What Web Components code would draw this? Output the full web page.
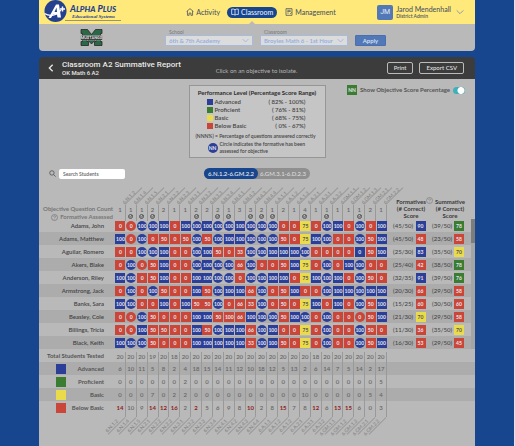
<!DOCTYPE html>
<html lang="en">
<head>
<meta charset="utf-8">
<title>Classroom A2 Summative Report</title>
<style>
  :root {
    --page: #17468f; --brand: #17468f; --panel: #b9b9b9; --band: #acacac;
    --blue: #2c3f98; --green: #3a7c30; --yellow: #eadb4b; --red: #c94639; --ink: #444;
  }
  html, body { margin: 0; background: var(--page); }
  body { font-family: Lato, "Noto Sans", sans-serif; font-size: 6px; line-height: 8px; color: var(--ink); }
</style>
</head>
<body>
<report-app>
  <app-header slot="header"></app-header>
  <school-filter slot="filter"></school-filter>
  <report-title slot="title">
    <span slot="name">Classroom A2 Summative Report</span>
    <span slot="sub">OK Math 6 A2</span>
    <span slot="hint">Click on an objective to isolate.</span>
  </report-title>
  <report-tools></report-tools>
  <score-table></score-table>
</report-app>

<script>
const define = (name, html, init) => {
  const t = document.createElement('template');
  t.innerHTML = '<style>:host,*{box-sizing:border-box}button,input,select{font:inherit;margin:0}a{color:inherit;text-decoration:none}svg{display:block;flex:none}</style>' + html;
  customElements.define(name, class extends HTMLElement {
    constructor() {
      super();
      this.attachShadow({ mode: 'open' }).append(t.content.cloneNode(true));
    }
    connectedCallback() { if (init && !this.ready) { this.ready = true; init(this, this.shadowRoot); } }
  });
};

const ICONS = {
  home: '<path d="M1 5.2 6 1l5 4.2M2.2 4.5V11h2.4V7.5h2.8V11h2.4V4.5"/>',
  book: '<path d="M6 2.6v8M6 2.6C5 1.6 3 1.4 1 1.7v8c2-.3 4 0 5 .9 1-.9 3-1.2 5-.9v-8c-2-.3-4-.1-5 .9"/>',
  manage: '<path d="M1.5 1h9v10h-9zM3.5 3.4h5M3.5 5.2h5M3.5 7.6h2M7.5 7.6l.8.9 1.6-2"/>',
  down: '<path d="M1 3.5 6 8.5l5-5"/>',
  back: '<path d="M8.5 1 3.5 6l5 5"/>',
  search: '<circle cx="5" cy="5" r="3.8"/><path d="m8 8 3.4 3.4"/>',
  help: '<circle cx="6" cy="6" r="5.2"/><path d="M4.4 4.7c0-2.2 3.3-2.1 3.3-.2C7.7 5.7 6 5.7 6 7.1M6 8.4v.9"/>',
  check: '<circle cx="6" cy="6" r="4.8"/><path d="m3.6 6 1.8 1.9L11 2"/>'
};
define('ui-icon', `<style>:host{display:inline-block;width:8px;height:8px;flex:none}svg{width:100%;height:100%}</style>
  <svg viewBox="0 0 12 12" fill="none" stroke="currentColor" aria-hidden="true"></svg>`,
  (el, r) => {
    const s = r.querySelector('svg');
    s.setAttribute('stroke-width', el.getAttribute('weight') || '1.2');
    s.innerHTML = ICONS[el.getAttribute('name')];
  });

define('brand-logo', `<style>
  :host{display:flex;gap:3px;color:#24418f}
  .badge{width:23px;height:23px}
  .words{display:flex;flex-direction:column;padding-top:4px}
  b{font:italic 900 9px/9px Lato,sans-serif;white-space:nowrap}
  b i{font-size:8px}
  small{font:italic bold 5px/6px "Liberation Serif",serif;padding-left:2px;white-space:nowrap}
  hr{margin:0 0 0 -5px;border:0;border-top:1px solid #9a9470;width:56px}
  </style>
  <svg class="badge" viewBox="0 0 46 46" aria-hidden="true">
    <circle cx="23" cy="22" r="22" fill="#24418f"/>
    <path d="M9 36 24 9h6l4 26h-7l-1-6H18l-4 7zM21 24h5l-1-9z" fill="#fff"/>
    <path d="M1 27C12 34 26 31 34 20" fill="none" stroke="#fff" stroke-width="2.5"/>
    <path d="M37 13v10M32 18h10" stroke="#fff" stroke-width="3"/>
  </svg>
  <div class="words"><b>A<i>LPHA</i> P<i>LUS</i></b><small>Educational Systems</small><hr></div>`);

define('app-header', `<style>
  :host{display:grid;grid-template-columns:1fr auto 1fr;background:#ffe97b;height:24px;padding:0 11px 0 5px;color:#4c5560;align-items:center}
  brand-logo{align-self:start}
  nav{display:flex;align-items:center;gap:11px;padding-left:14px;font-size:7px;font-weight:500;line-height:11px}
  nav a{display:flex;align-items:center;gap:2px;position:relative}
  .on{background:var(--brand);color:#e8eefa;border-radius:6px;padding:0 4px;margin:0 -3px 0 -4px}
  .on::after{content:"";position:absolute;left:calc(50% - 4px);top:14px;border:4px solid transparent;border-top:0;border-bottom-color:var(--panel)}
  .user{display:flex;justify-self:end;align-items:center;gap:3px;padding:0;border:0;background:none;color:inherit;text-align:left}
  .av{width:16px;height:15px;border-radius:2px;background:#5378b8;color:#e4ebf7;font:7px/15px Roboto,sans-serif;text-align:center}
  .who{display:block;font-size:7px;font-weight:500;line-height:8px;white-space:nowrap}
  .who small{display:block;font-size:5px;line-height:6px;font-weight:600}
  .user ui-icon{color:#6b86b5;margin-left:2px}
  </style>
  <brand-logo></brand-logo>
  <nav><a href="#activity"><ui-icon name="home"></ui-icon>Activity</a><a class="on" href="#classroom"><ui-icon name="book"></ui-icon>Classroom</a><a href="#management"><ui-icon name="manage"></ui-icon>Management</a></nav>
  <button class="user"><span class="av">JM</span><span class="who">Jarod Mendenhall<small>District Admin</small></span><ui-icon name="down"></ui-icon></button>`);

define('school-filter', `<style>
  :host{display:flex;align-items:flex-end;gap:7px;height:27px;background:var(--panel);border-radius:0 0 4px 4px;padding:0 40px 5px 41px;color:#777}
  .team{width:23px;height:17px;margin-right:auto}
  .field{position:relative;flex:0 1 88px;display:flex;flex-direction:column}
  label{font-size:5px;line-height:6px;padding-left:4px}
  select{appearance:none;width:100%;height:11px;border:1px solid #a9bbdd;border-radius:1px;background:#dcdcdc;color:#8fade0;font-size:6px;font-weight:600;line-height:9px;padding:0 12px 0 3px}
  .field ui-icon{position:absolute;right:4px;bottom:2px;width:7px;height:7px;color:#8fade0}
  button{width:31px;height:11px;border:1px solid #4a6fb0;border-radius:1px;background:#5378b8;color:#dde6f5;font-size:6px;font-weight:600;line-height:9px;padding:0;margin-right:49px}
  </style>
  <svg class="team" viewBox="0 0 46 34" role="img" aria-label="School logo">
    <path d="M2 1h13l8 10 8-10h13v8h-3v16h3v8H29v-8h3v-5l-9 10-9-10v5h3v8H2v-8h3V9H2z" fill="#2b6848" stroke="#222" stroke-width="1.5"/>
    <path d="M1 13h44v9H1z" fill="#111" stroke="#ddd"/>
    <text x="23" y="20.5" text-anchor="middle" font-family="Roboto" font-weight="bold" font-size="8" fill="#eee">MUSTANGS</text>
  </svg>
  <div class="field"><label for="s">School</label><select id="s"><option>6th &amp; 7th Academy</option></select><ui-icon name="down"></ui-icon></div>
  <div class="field"><label for="c">Classroom</label><select id="c"><option>Broyles Math 6 - 1st Hour</option></select><ui-icon name="down"></ui-icon></div>
  <button>Apply</button>`);

define('report-title', `<style>
  :host{display:grid;grid-template-columns:1fr auto 1fr;align-items:center;height:22px;background:#3c3c3c;border-radius:4px 4px 0 0;color:#e8e8e8;padding:0 11px 0 8px}
  .l{display:flex;align-items:center;gap:7px}
  .l button{border:0;background:none;color:inherit;padding:0;display:flex}
  h1{margin:0;font:500 8px/9px Roboto,sans-serif;white-space:nowrap;width:0}
  h1 small{display:block;font-size:6px;line-height:7px}
  .hint{color:#b5b5b5;padding-top:5px;padding-left:2px;white-space:nowrap}
  .r{display:flex;gap:6px;justify-self:end}
  .r button{height:12px;border:1px solid #bbb;border-radius:2px;background:none;color:#ddd;padding:0 6px;font-size:6px;font-weight:600;line-height:10px}
  </style>
  <div class="l"><button aria-label="Back"><ui-icon name="back" weight="2"></ui-icon></button><h1><slot name="name"></slot><small><slot name="sub"></slot></small></h1></div>
  <div class="hint"><slot name="hint"></slot></div>
  <div class="r"><button>Print</button><button>Export CSV</button></div>`);

define('score-chip', `<style>
  :host{display:flex;align-items:center;justify-content:center;width:10px;height:10px;color:#e6e6ee;background:var(--red);font-size:5px;font-weight:bold;line-height:10px}
  :host([level=b]){background:var(--blue)}
  :host([level=g]){background:var(--green)}
  :host([level=y]){background:var(--yellow);color:#555}
  :host([round]){border-radius:50%}
  </style><slot></slot>`);

define('perf-legend', `<style>
  :host{display:block;border:1px solid #969696;background:#c5c5c5;padding:3px 6px 2px;width:137px;color:#444}
  h2{margin:0 0 1px;font-size:6px;line-height:8px;text-align:center;color:#2c2c2c;white-space:nowrap}
  ul{list-style:none;margin:0;padding:0 13px 0 11px}
  li{display:flex;align-items:center;gap:2px;line-height:8px;font-weight:600}
  li i{width:6px;height:6px;background:var(--c)}
  li span{margin-left:auto}
  p{margin:3px 0 1px;font-size:5px;line-height:7px;white-space:nowrap;font-weight:600}
  .k{display:flex;align-items:center;gap:2px;padding-left:12px;font-size:5px;line-height:7px;font-weight:600}
  </style>
  <h2>Performance Level (Percentage Score Range)</h2>
  <ul>
    <li style="--c:var(--blue)"><i></i>Advanced<span>( 82% - 100%)</span></li>
    <li style="--c:var(--green)"><i></i>Proficient<span>( 76% - 81%)</span></li>
    <li style="--c:var(--yellow)"><i></i>Basic<span>( 68% - 75%)</span></li>
    <li style="--c:var(--red)"><i></i>Below Basic<span>( 0% - 67%)</span></li>
  </ul>
  <p>(NNN%) = Percentage of questions answered correctly</p>
  <div class="k"><score-chip level="b" round>NN</score-chip><span>Circle indicates the formative has been<br>assessed for objective</span></div>`);

define('report-tools', `<style>
  :host{display:grid;grid-template-columns:1fr auto 1fr;padding:6px 10px 0 10px;row-gap:10px}
  perf-legend{grid-column:2;justify-self:center}
  .show{display:flex;align-items:center;align-self:start;justify-self:end;gap:3px;font-weight:bold;color:#555;white-space:nowrap}
  .show input{appearance:none;margin:0;width:12px;height:7px;border-radius:4px;background:radial-gradient(circle at 8px 50%,#fff 3px,#3fb0b9 4px)}
  .search{display:flex;align-items:center;gap:3px;grid-column:1}
  .search input{width:66px;height:10px;border:0;border-radius:2px;background:#fff;padding:0 4px;font-size:5px;font-weight:600;color:#555}
  .search input::placeholder{color:#666;opacity:1}
  .tabs{display:flex;justify-self:center;background:#8f8f8f;border-radius:6px;height:11px}
  .tabs button{border:0;border-radius:6px;background:none;color:#ddd;font-size:6px;font-weight:500;line-height:11px;padding:0 4px 0 2px;white-space:nowrap}
  .tabs .on{background:var(--brand);padding:0 4px;color:#eee}
  .search ui-icon{width:7px;height:7px}
  </style>
  <perf-legend></perf-legend>
  <label class="show"><score-chip level="g">NN</score-chip>Show Objective Score Percentage<input type="checkbox" role="switch" checked></label>
  <label class="search"><ui-icon name="search"></ui-icon><input type="search" placeholder="Search Students" aria-label="Search Students"></label>
  <div class="tabs"><button class="on">6.N.1.2-6.GM.2.2</button><button>6.GM.3.1-6.D.2.3</button></div>`);

const OBJ = '6.N.1.2 6.N.1.4 6.N.1.5 6.N.2.1 6.N.2.2 6.N.2.3 6.N.3.1 6.N.3.2 6.N.3.3 6.N.3.4 6.N.4.1 6.N.4.2 6.N.4.3 6.N.4.4 6.A.1.1 6.A.1.2 6.A.1.3 6.A.2.1 6.A.3.1 6.A.3.2 6.GM.1.1 6.GM.1.2 6.GM.1.3 6.GM.2.1 6.GM.2.2'.split(' ');
const COUNTS = '1 1 1 2 2 1 1 2 2 2 1 3 3 2 1 2 1 4 1 1 1 1 1 2 1'.split(' ');
const ASSESSED = [1, 2, 3, 7, 9, 10, 12, 13, 14, 17, 19, 22];
// Cell suffixes: c = circle, b / g / r / y = explicit level.
const STUDENTS = [
  ['Adams, John', '0 0c 100c 100c 100 0 100 100c 100 100c 100c 100 100c 100c 100c 0 0 75 0 100c 100 0 100c 0 100', '45/50', '90b', '39/50', '78g'],
  ['Adams, Matthew', '100 0c 100c 0 50 0 50 100c 50 100c 100 100 100c 100c 100c 50 0 75 100 100c 0 0 100c 50 100', '45/50', '48', '23/50', '58'],
  ['Aguilar, Romero', '0 0 100c 100c 100 0 0 100c 100 50 0 33 100c 100c 100 100 100 100c 0 0 0 0 0b 50 100', '25/30', '83b', '35/50', '70y'],
  ['Akers, Blake', '0 100c 0c 50 100 0 0 100c 100 100c 100c 66 100c 0 0 50 100 75 0 100c 0 100 100c 0 0', '25/40', '42', '38/50', '78g'],
  ['Anderson, Riley', '100 100c 0 50 100 0 0 100 100 100c 100c 0 100c 100c 100 100 0 75 100 100c 100 0 100c 50 0', '32/35', '91b', '39/50', '76g'],
  ['Armstrong, Jack', '0 100c 0 100c 50 0 0 100 50 100c 100 100 66 100c 0 50 100 0 0 100c 100 100 100c 100 100', '20/30', '66', '29/50', '58'],
  ['Banks, Sara', '100 100c 0 0 100 0 100 50 50 100c 0 66 33 100c 0 50 0 75 100 0 100 0 100c 50 100', '15/25', '60', '30/50', '60'],
  ['Beasley, Cole', '0 0c 100c 50 0 0 0 100 100 50 100r 66 100 100c 100c 50 100 100c 0 100c 0 0 0c 50 100', '21/30', '70y', '29/50', '58'],
  ['Billings, Tricia', '0 0c 100 50 50 0 0 100 50 100c 100 100 66 100c 100 0 0 75 0 100c 0 0 100c 50 0', '11/30', '36', '35/50', '70y'],
  ['Black, Keith', '100 100c 100c 50 0 0 0 100 100 100 100 100 33 100c 100 50 0 75 0 100c 0 0 100c 50 100', '16/30', '53', '29/50', '45']
];
const TOTALS = [
  ['Total Students Tested', '', '20 20 20 19 20 18 20 20 20 20 20 20 20 20 20 20 20 20 18 20 20 20 20 20 20'],
  ['Advanced', 'blue', '6 10 11 5 8 2 4 18 15 14 11 12 10 18 12 5 13 2 6 14 7 5 14 2 17'],
  ['Proficient', 'green', '0 0 0 0 0 0 2 0 0 0 0 0 0 0 0 0 0 0 0 0 0 0 0 0 5'],
  ['Basic', 'yellow', '0 0 0 7 0 2 2 0 0 0 0 0 0 0 0 0 0 10 0 0 0 0 0 5 4'],
  ['Below Basic', 'red', '14! 10 9 14! 12! 16! 2 2! 5 6 9 8 10! 2 8 15! 7 8 12! 6 13! 15! 6 0 3']
];
const chip = code => {
  const v = parseInt(code), f = code.replace(/\d/g, '');
  const level = /[bgry]/.test(f) ? f.match(/[bgry]/)[0] : v === 100 ? 'b' : v === 75 ? 'y' : 'r';
  return `<score-chip level="${level}"${f.includes('c') ? ' round' : ''}>${v}</score-chip>`;
};

define('score-table', `<style>
  :host{display:block;padding-top:6px}
  table,thead,tbody,tfoot{display:block}
  tr{display:grid;grid-template-columns:76px repeat(25,minmax(0,1fr)) 27px 13px 26px 12px 10px;height:13px;align-items:center}
  tbody tr:nth-child(even),tfoot tr:nth-child(even){background:var(--band)}
  th,td{padding:0;min-width:0;white-space:nowrap;text-align:center}
  th:first-child{text-align:right;padding-right:11px;font-weight:600}
  td{display:flex;justify-content:center}
  td.n{justify-content:flex-end;padding-right:1px;font-size:6px;font-weight:500}
  tbody{position:relative}
  tbody::after{content:"";position:absolute;right:0;top:0;bottom:0;width:4px;background:linear-gradient(#7d7d7d 24px,#a5a5a5 24px)}
  thead tr{height:34px;align-items:end}
  thead th{font-size:6px;font-weight:600;color:#777}
  thead th:first-child{padding-right:2px;margin-bottom:-2px;line-height:8px;font-weight:bold}
  thead th:first-child ui-icon{vertical-align:-2px;margin-right:2px;width:7px;height:7px}
  .o{position:relative;height:16px;padding-top:1px;margin-bottom:-2px;line-height:8px;border-right:1px solid #999;color:#666}
  .o a,.f a{position:absolute;left:8px;top:-5px;font-size:5px;line-height:6px;font-weight:600;color:#888;transform:rotate(-45deg);transform-origin:left center}
  .o::after{content:"";position:absolute;left:100%;top:-1px;width:24px;border-top:1px solid #999;transform:rotate(-45deg);transform-origin:left center}
  .o ui-icon{display:block;width:5px;height:5px;margin:0 auto;color:#444}
  .s{grid-column:span 2;line-height:7px;color:#3a3a3a!important;font-weight:bold!important;position:relative}
  th.s{padding-left:8px}
  .s ui-icon{position:absolute;right:-6px;top:-1px;width:7px;height:7px;color:#777}
  tfoot th:first-child{display:flex;align-items:center;justify-content:space-between;padding-left:17px;font-weight:bold;color:#555}
  tfoot tr:first-child th{padding-left:0;justify-content:flex-end}
  tfoot i{width:10px;height:10px}
  tfoot td{align-self:stretch;align-items:center;border-right:1px solid #999;font-weight:600;color:#666}
  tfoot tr:first-child td{align-self:end;height:10px;padding-bottom:1px}
  tfoot td.w{color:#8e2020;font-weight:bold}
  tfoot tr.f{background:none;height:32px;align-items:start}
  tfoot .f td{position:relative;height:3px;align-self:start}
  .f a{left:auto;right:8px;top:3px;transform-origin:right center}
  .f td::after{content:"";position:absolute;right:0;top:3px;width:24px;border-top:1px solid #999;transform:rotate(-45deg);transform-origin:right center}
  </style><table><thead></thead><tbody></tbody><tfoot></tfoot></table>`,
  (el, r) => {
    r.querySelector('thead').innerHTML = '<tr><th>Objective Question Count<br><ui-icon name="help"></ui-icon>Formative Assessed</th>' +
      OBJ.map((o, i) => `<th class="o"><a href="#${o}">${o}</a>${COUNTS[i]}${ASSESSED.includes(i) ? '<ui-icon name="check" weight="2"></ui-icon>' : ''}</th>`).join('') +
      '<th class="s">Formatives<ui-icon name="help" weight="1"></ui-icon><br>(# Correct)<br>Score</th><th class="s">Summative<br>(# Correct)<br>Score</th></tr>';
    r.querySelector('tbody').innerHTML = STUDENTS.map(([name, s, f, fs, m, ms]) =>
      `<tr><th>${name}</th>${s.split(' ').map(c => `<td>${chip(c)}</td>`).join('')}<td class="n">(${f})</td><td>${chip(fs)}</td><td class="n">(${m})</td><td>${chip(ms)}</td></tr>`).join('');
    r.querySelector('tfoot').innerHTML = TOTALS.map(([name, c, s]) =>
      `<tr><th>${c ? `<i style="background:var(--${c})"></i>` : ''}${name}</th>${s.split(' ').map(v => `<td${v.endsWith('!') ? ' class="w"' : ''}>${parseInt(v)}</td>`).join('')}</tr>`).join('') +
      `<tr class="f"><th></th>${OBJ.map(o => `<td><a href="#${o}">${o}</a></td>`).join('')}</tr>`;
  });

define('report-app', `<style>
  :host{display:flex;flex-direction:column;min-height:100vh;padding:0 39px;border-right:1px solid #dfe3ea;background:var(--page)}
  main{margin-top:6px;flex:1;display:flex;flex-direction:column;background:var(--panel)}
  .t{background:var(--page)}
  </style><slot name="header"></slot><slot name="filter"></slot><main><div class="t"><slot name="title"></slot></div><slot></slot></main>`);
</script>
</body>
</html>
